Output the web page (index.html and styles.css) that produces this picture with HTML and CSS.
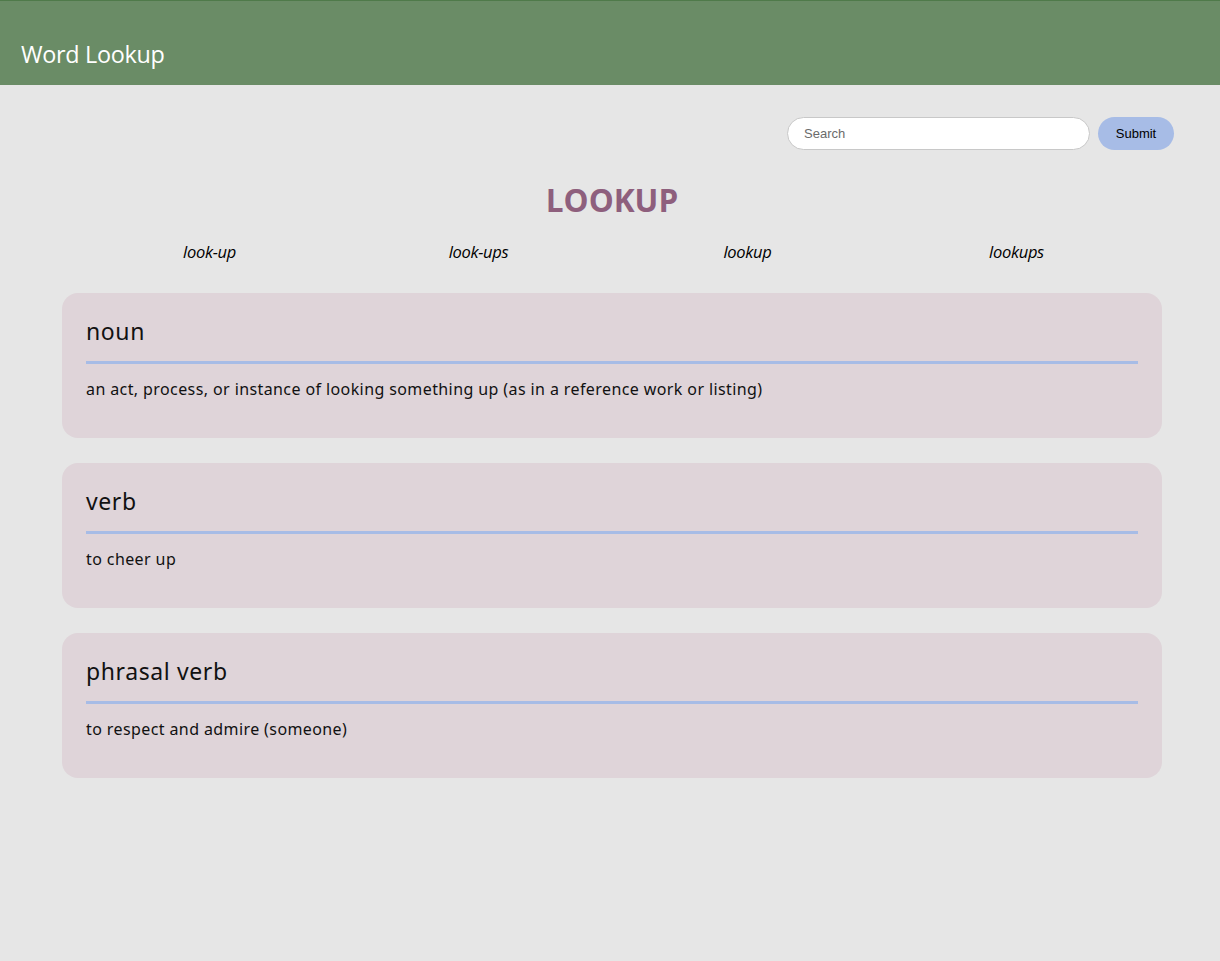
FILE: index.html
```html
<!DOCTYPE html>
<html lang="en">
<head>
<meta charset="utf-8">
<title>Word Lookup</title>
<link rel="stylesheet" href="styles.css">
</head>
<body>
<header class="topbar">
  <h1 class="brand">Word Lookup</h1>
</header>
<main class="content">
  <form class="search">
    <input class="search-input" type="text" placeholder="Search">
    <button class="search-btn" type="button">Submit</button>
  </form>
  <h2 class="word">LOOKUP</h2>
  <ul class="variants">
    <li>look-up</li>
    <li>look-ups</li>
    <li>lookup</li>
    <li>lookups</li>
  </ul>
  <section class="cards">
    <article class="card">
      <h3 class="pos">noun</h3>
      <p class="def">an act, process, or instance of looking something up (as in a reference work or listing)</p>
    </article>
    <article class="card">
      <h3 class="pos">verb</h3>
      <p class="def">to cheer up</p>
    </article>
    <article class="card">
      <h3 class="pos">phrasal verb</h3>
      <p class="def">to respect and admire (someone)</p>
    </article>
  </section>
</main>
</body>
</html>
```

FILE: styles.css
```css
* { box-sizing: border-box; }
html, body { margin: 0; padding: 0; }
body {
  background: #e6e6e6;
  font-family: "Open Sans", "Noto Sans", sans-serif;
  min-height: 961px;
}
.topbar {
  background: #6a8c66;
  border-top: 1px solid #4f7a4a;
  height: 85px;
  display: flex;
  align-items: flex-end;
  padding: 0 0 16px 21px;
}
.brand {
  margin: 0;
  color: #ffffff;
  font-family: "Open Sans", sans-serif;
  font-weight: 400;
  font-size: 23.4px;
  line-height: 30px;
  letter-spacing: -0.3px;
}
.content {
  padding: 32px 46px 0 62px;
}
.search {
  display: flex;
  justify-content: flex-end;
  gap: 8px;
  margin: 0;
}
.search-input {
  width: 303px;
  height: 33px;
  border: 1px solid #c8c8c8;
  border-radius: 17px;
  background: #fff;
  padding: 0 16px;
  font-family: "Liberation Sans", Arial, sans-serif;
  font-size: 13px;
  color: #333;
  outline: none;
}
.search-input::placeholder { color: #6b6b6b; }
.search-btn {
  width: 76px;
  height: 33px;
  border: none;
  border-radius: 17px;
  background: #a7bce6;
  font-family: "Liberation Sans", Arial, sans-serif;
  font-size: 13px;
  color: #000;
  padding: 0;
}
.word {
  margin: 30px 0 0 0;
  width: 1100px;
  text-align: center;
  color: #8e5f7d;
  font-family: "Open Sans", sans-serif;
  font-weight: 700;
  font-size: 31.5px;
  line-height: 40px;
}
.variants {
  list-style: none;
  width: 1100px;
  margin: 20px 0 0 0;
  padding: 0 11px 0 13px;
  display: grid;
  grid-template-columns: repeat(4, 1fr);
}
.variants li {
  text-align: center;
  font-style: italic;
  font-size: 16.5px;
  line-height: 24px;
  color: #000;
  letter-spacing: -0.3px;
}
.cards {
  margin-top: 29px;
  width: 1100px;
  display: flex;
  flex-direction: column;
  gap: 25px;
}
.card {
  background: #dfd4d9;
  border-radius: 16px;
  height: 145px;
  padding: 23px 24px 0 24px;
}
.pos {
  margin: 0;
  font-family: "Noto Sans", sans-serif;
  font-weight: 400;
  font-size: 23px;
  letter-spacing: 0.6px;
  line-height: 30px;
  color: #111;
  padding-bottom: 15px;
  border-bottom: 3px solid #a7bce6;
}
.def {
  margin: 14px 0 0 0;
  font-family: "Noto Sans", sans-serif;
  font-size: 16px;
  letter-spacing: 0.4px;
  line-height: 22px;
  color: #111;
}
```
